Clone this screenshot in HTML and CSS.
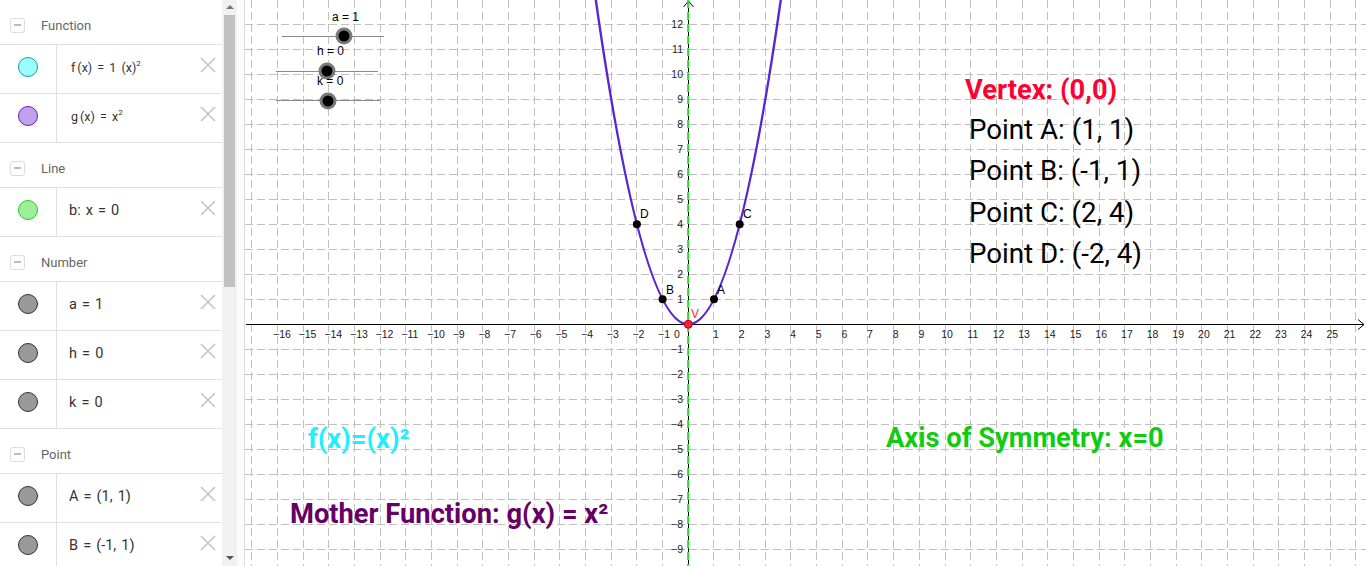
FILE: index.html
```html
<!DOCTYPE html>
<html>
<head>
<meta charset="utf-8">
<link rel="stylesheet" href="styles.css">
</head>
<body>
<div class="app">
  <aside class="algebra">
    <div class="list">
      <div class="section"><span class="toggle"></span><span class="section-title">Function</span></div>
      <div class="item">
        <div class="marble-cell"><span class="marble marble-f"></span></div>
        <div class="item-text math">f<span class="th"></span>(x) <span class="eq">=</span> 1 <span class="th"></span>(x)<sup>2</sup></div>
        <svg class="delete" viewBox="0 0 16 16"><path d="M1 1L15 15M15 1L1 15"/></svg>
      </div>
      <div class="item">
        <div class="marble-cell"><span class="marble marble-g"></span></div>
        <div class="item-text math">g<span class="th"></span>(x) <span class="eq">=</span> x<sup>2</sup></div>
        <svg class="delete" viewBox="0 0 16 16"><path d="M1 1L15 15M15 1L1 15"/></svg>
      </div>
      <div class="section"><span class="toggle"></span><span class="section-title">Line</span></div>
      <div class="item">
        <div class="marble-cell"><span class="marble marble-b"></span></div>
        <div class="item-text">b: x = 0</div>
        <svg class="delete" viewBox="0 0 16 16"><path d="M1 1L15 15M15 1L1 15"/></svg>
      </div>
      <div class="section"><span class="toggle"></span><span class="section-title">Number</span></div>
      <div class="item">
        <div class="marble-cell"><span class="marble marble-n"></span></div>
        <div class="item-text">a = 1</div>
        <svg class="delete" viewBox="0 0 16 16"><path d="M1 1L15 15M15 1L1 15"/></svg>
      </div>
      <div class="item">
        <div class="marble-cell"><span class="marble marble-n"></span></div>
        <div class="item-text">h = 0</div>
        <svg class="delete" viewBox="0 0 16 16"><path d="M1 1L15 15M15 1L1 15"/></svg>
      </div>
      <div class="item">
        <div class="marble-cell"><span class="marble marble-n"></span></div>
        <div class="item-text">k = 0</div>
        <svg class="delete" viewBox="0 0 16 16"><path d="M1 1L15 15M15 1L1 15"/></svg>
      </div>
      <div class="section"><span class="toggle"></span><span class="section-title">Point</span></div>
      <div class="item">
        <div class="marble-cell"><span class="marble marble-n"></span></div>
        <div class="item-text">A = (1, 1)</div>
        <svg class="delete" viewBox="0 0 16 16"><path d="M1 1L15 15M15 1L1 15"/></svg>
      </div>
      <div class="item">
        <div class="marble-cell"><span class="marble marble-n"></span></div>
        <div class="item-text">B = (-1, 1)</div>
        <svg class="delete" viewBox="0 0 16 16"><path d="M1 1L15 15M15 1L1 15"/></svg>
      </div>
    </div>
    <div class="scrollbar">
      <span class="arrow-up"></span>
      <span class="thumb"></span>
      <span class="spacer"></span>
      <span class="arrow-down"></span>
    </div>
  </aside>
  <div class="splitter"></div>
  <main class="graphics">
    <svg class="canvas" width="1121" height="566" viewBox="245 0 1121 566">
      <g class="grid">
        <path d="M251.5 0V566M277.5 0V566M303.5 0V566M328.5 0V566M354.5 0V566M380.5 0V566M405.5 0V566M431.5 0V566M457.5 0V566M482.5 0V566M508.5 0V566M534.5 0V566M559.5 0V566M585.5 0V566M611.5 0V566M636.5 0V566M662.5 0V566M713.5 0V566M739.5 0V566M765.5 0V566M790.5 0V566M816.5 0V566M842.5 0V566M867.5 0V566M893.5 0V566M919.5 0V566M945.5 0V566M970.5 0V566M996.5 0V566M1022.5 0V566M1047.5 0V566M1073.5 0V566M1099.5 0V566M1124.5 0V566M1150.5 0V566M1176.5 0V566M1201.5 0V566M1227.5 0V566M1253.5 0V566M1278.5 0V566M1304.5 0V566M1330.5 0V566M1355.5 0V566"/>
        <path d="M245 24.5H1366M245 49.5H1366M245 74.5H1366M245 99.5H1366M245 124.5H1366M245 149.5H1366M245 174.5H1366M245 199.5H1366M245 224.5H1366M245 249.5H1366M245 274.5H1366M245 299.5H1366M245 349.5H1366M245 374.5H1366M245 399.5H1366M245 424.5H1366M245 449.5H1366M245 474.5H1366M245 499.5H1366M245 524.5H1366M245 549.5H1366"/>
      </g>
      <g class="axes">
        <path d="M246 324.5H1364M688.5 1V566"/>
        <path d="M1358 319.5L1364 324.5L1358 329.5M683.5 7L688.5 1L693.5 7"/>
      </g>
      <g class="xlabels">
        <text x="273" y="338">−16</text>
        <text x="298.6" y="338">−15</text>
        <text x="324.3" y="338">−14</text>
        <text x="350" y="338">−13</text>
        <text x="375.6" y="338">−12</text>
        <text x="401.3" y="338">−11</text>
        <text x="427" y="338">−10</text>
        <text x="452.7" y="338">−9</text>
        <text x="478.4" y="338">−8</text>
        <text x="504" y="338">−7</text>
        <text x="529.7" y="338">−6</text>
        <text x="555.4" y="338">−5</text>
        <text x="581.1" y="338">−4</text>
        <text x="606.8" y="338">−3</text>
        <text x="632.4" y="338">−2</text>
        <text x="658.1" y="338">−1</text>
        <text x="674" y="338">0</text>
      </g>
      <g class="xlabels-pos">
        <text x="716" y="338">1</text>
        <text x="741.7" y="338">2</text>
        <text x="767.3" y="338">3</text>
        <text x="793" y="338">4</text>
        <text x="818.7" y="338">5</text>
        <text x="844.4" y="338">6</text>
        <text x="870" y="338">7</text>
        <text x="895.7" y="338">8</text>
        <text x="921.4" y="338">9</text>
        <text x="947.1" y="338">10</text>
        <text x="972.8" y="338">11</text>
        <text x="998.5" y="338">12</text>
        <text x="1024.1" y="338">13</text>
        <text x="1049.8" y="338">14</text>
        <text x="1075.5" y="338">15</text>
        <text x="1101.2" y="338">16</text>
        <text x="1126.9" y="338">17</text>
        <text x="1152.5" y="338">18</text>
        <text x="1178.2" y="338">19</text>
        <text x="1203.9" y="338">20</text>
        <text x="1229.6" y="338">21</text>
        <text x="1255.3" y="338">22</text>
        <text x="1280.9" y="338">23</text>
        <text x="1306.6" y="338">24</text>
        <text x="1332.3" y="338">25</text>
      </g>
      <g class="ylabels">
        <text x="683" y="28">12</text>
        <text x="683" y="53">11</text>
        <text x="683" y="78">10</text>
        <text x="683" y="103">9</text>
        <text x="683" y="128">8</text>
        <text x="683" y="153">7</text>
        <text x="683" y="178">6</text>
        <text x="683" y="203">5</text>
        <text x="683" y="228">4</text>
        <text x="683" y="253">3</text>
        <text x="683" y="278">2</text>
        <text x="683" y="303">1</text>
        <text x="683" y="353">−1</text>
        <text x="683" y="378">−2</text>
        <text x="683" y="403">−3</text>
        <text x="683" y="428">−4</text>
        <text x="683" y="453">−5</text>
        <text x="683" y="478">−6</text>
        <text x="683" y="503">−7</text>
        <text x="683" y="528">−8</text>
        <text x="683" y="553">−9</text>
      </g>
      <path class="symline" d="M688.2 0V566"/>
      <path class="curve" d="M590.72 -36.7Q688.3 685.3 785.88 -36.7"/>
      <g class="points">
        <circle cx="714" cy="299.3" r="4"/>
        <circle cx="662.6" cy="299.3" r="4"/>
        <circle cx="739.7" cy="224.3" r="4"/>
        <circle cx="636.9" cy="224.3" r="4"/>
      </g>
      <circle class="vertex" cx="688.3" cy="324.3" r="4"/>
      <g class="plabels">
        <text x="717" y="294">A</text>
        <text x="666" y="294">B</text>
        <text x="743" y="218">C</text>
        <text x="640" y="218">D</text>
      </g>
      <text class="vlabel" x="691" y="318">V</text>
      <g class="sliders">
        <path class="track" d="M282 36.5H384M276 71.5H378M276 100.5H380"/>
        <circle class="knob" cx="344" cy="36" r="7"/>
        <circle class="knob" cx="327" cy="71" r="7"/>
        <circle class="knob" cx="328" cy="101" r="7"/>
        <text class="slabel" x="332" y="21">a = 1</text>
        <text class="slabel" x="317" y="55">h = 0</text>
        <text class="slabel" x="317" y="85">k = 0</text>
      </g>
      <text class="big bold t-red" x="965" y="99">Vertex: (0,0)</text>
      <text class="big" x="969" y="139">Point A: (1, 1)</text>
      <text class="big" x="969" y="180">Point B: (-1, 1)</text>
      <text class="big" x="969" y="222">Point C: (2, 4)</text>
      <text class="big" x="969" y="263">Point D: (-2, 4)</text>
      <text class="big bold t-cyan" x="308" y="448">f(x)=(x)²</text>
      <text class="big bold t-green" x="886" y="447">Axis of Symmetry: x=0</text>
      <text class="big bold t-purple" x="290" y="523">Mother Function: g(x) = x²</text>
    </svg>
  </main>
</div>
</body>
</html>
```
FILE: styles.css
```css
* { box-sizing: border-box; }
html, body {
  margin: 0;
  padding: 0;
  width: 1366px;
  height: 566px;
  overflow: hidden;
  background: #fff;
  font-family: Roboto, "Liberation Sans", sans-serif;
}
.app {
  display: flex;
  width: 1366px;
  height: 566px;
}
.algebra {
  flex: none;
  width: 237px;
  height: 566px;
  display: flex;
}
.list {
  width: 222px;
  height: 566px;
  overflow: hidden;
}
.section {
  height: 45px;
  border-bottom: 1px solid #e0e0e0;
  display: flex;
  align-items: center;
  padding: 6px 0 0 10px;
}
.toggle {
  width: 15px;
  height: 15px;
  border: 1px solid #dcdcdc;
  border-radius: 3px;
  display: flex;
  align-items: center;
  justify-content: center;
}
.toggle::after {
  content: "";
  width: 7px;
  height: 2px;
  background: #bbb;
}
.section-title {
  margin-left: 16px;
  font-size: 13px;
  color: #666;
}
.item {
  height: 49px;
  border-bottom: 1px solid #e0e0e0;
  display: flex;
  align-items: center;
  padding-bottom: 4px;
}
.marble-cell {
  width: 57px;
  height: 49px;
  margin-bottom: -4px;
  border-right: 1px solid #e0e0e0;
  display: flex;
  align-items: center;
  justify-content: center;
  padding: 0 1px 4px 0;
  flex: none;
}
.marble {
  width: 20px;
  height: 20px;
  border-radius: 50%;
  border: 1px solid #333;
  background: #999;
}
.marble-f { background: #99ffff; border-color: #1a9c9c; }
.marble-g { background: #c3a0ec; border-color: #5a20cc; }
.marble-b { background: #9fee99; border-color: #22cc22; }
.marble-n { background: #999; border-color: #333; }
.item-text {
  flex: 1;
  padding-left: 12px;
  font-size: 14.5px;
  word-spacing: 1.5px;
  color: #333;
  white-space: nowrap;
}
.math {
  font-size: 12.5px;
  word-spacing: 0;
  padding-left: 14px;
}
.math .th { display: inline-block; width: 2px; }
.math .eq { padding: 0 2px; }
.math sup {
  font-size: 8px;
  vertical-align: 6px;
  line-height: 0;
}
.delete {
  flex: none;
  width: 16px;
  height: 16px;
  margin: 0 6px 4px 0;
  fill: none;
  stroke: #c4c4c4;
  stroke-width: 1.6;
}
.scrollbar {
  width: 15px;
  height: 566px;
  background: #f1f1f1;
  display: flex;
  flex-direction: column;
  align-items: center;
}
.arrow-up, .arrow-down {
  width: 0;
  height: 0;
  border-left: 4px solid transparent;
  border-right: 4px solid transparent;
}
.arrow-up {
  margin-top: 5px;
  border-bottom: 4px solid #777;
}
.arrow-down {
  margin-bottom: 6px;
  border-top: 4px solid #555;
}
.thumb {
  margin-top: 6px;
  width: 11px;
  height: 272px;
  background: #c1c1c1;
}
.spacer { flex: 1; }
.splitter {
  flex: none;
  width: 7px;
  height: 566px;
  background: #fcfcfc;
}
.graphics {
  flex: 1;
  height: 566px;
  border-left: 1px solid #dcdcdc;
  overflow: hidden;
}
.canvas { display: block; }
.grid path {
  fill: none;
  stroke: #c0c0c0;
  stroke-width: 1;
  stroke-dasharray: 8 4;
}
.axes path {
  fill: none;
  stroke: #000;
  stroke-width: 1;
}
.xlabels text, .xlabels-pos text, .ylabels text {
  font-family: "Liberation Sans", Arial, sans-serif;
  font-size: 10.5px;
  fill: #222;
}
.xlabels-pos text { text-anchor: middle; }
.ylabels text { text-anchor: end; }
.symline {
  fill: none;
  stroke: #2de02d;
  stroke-width: 2.2;
  stroke-dasharray: 8 4;
}
.curve {
  fill: none;
  stroke: #5a26d2;
  stroke-width: 2.4;
}
.points circle { fill: #000; }
.vertex { fill: #ff1a3c; stroke: #b00020; stroke-width: 1; }
.plabels text, .vlabel {
  font-family: "Liberation Sans", Arial, sans-serif;
  font-size: 12px;
  fill: #000;
}
.vlabel { fill: #ff2a2a; }
.track {
  fill: none;
  stroke: #8a8a8a;
  stroke-width: 1;
}
.knob {
  fill: #000;
  stroke: #7a7a7a;
  stroke-width: 3;
}
.slabel {
  font-family: "Liberation Sans", Arial, sans-serif;
  font-size: 12px;
  fill: #000;
}
.big {
  font-family: Roboto, "Liberation Sans", sans-serif;
  font-size: 27.7px;
  fill: #000;
}
.bold { font-weight: 700; font-size: 27.3px; }
.t-red { fill: #ff0033; }
.t-cyan { fill: #1ef0ff; }
.t-green { fill: #10cc10; }
.t-purple { fill: #660066; }
```
